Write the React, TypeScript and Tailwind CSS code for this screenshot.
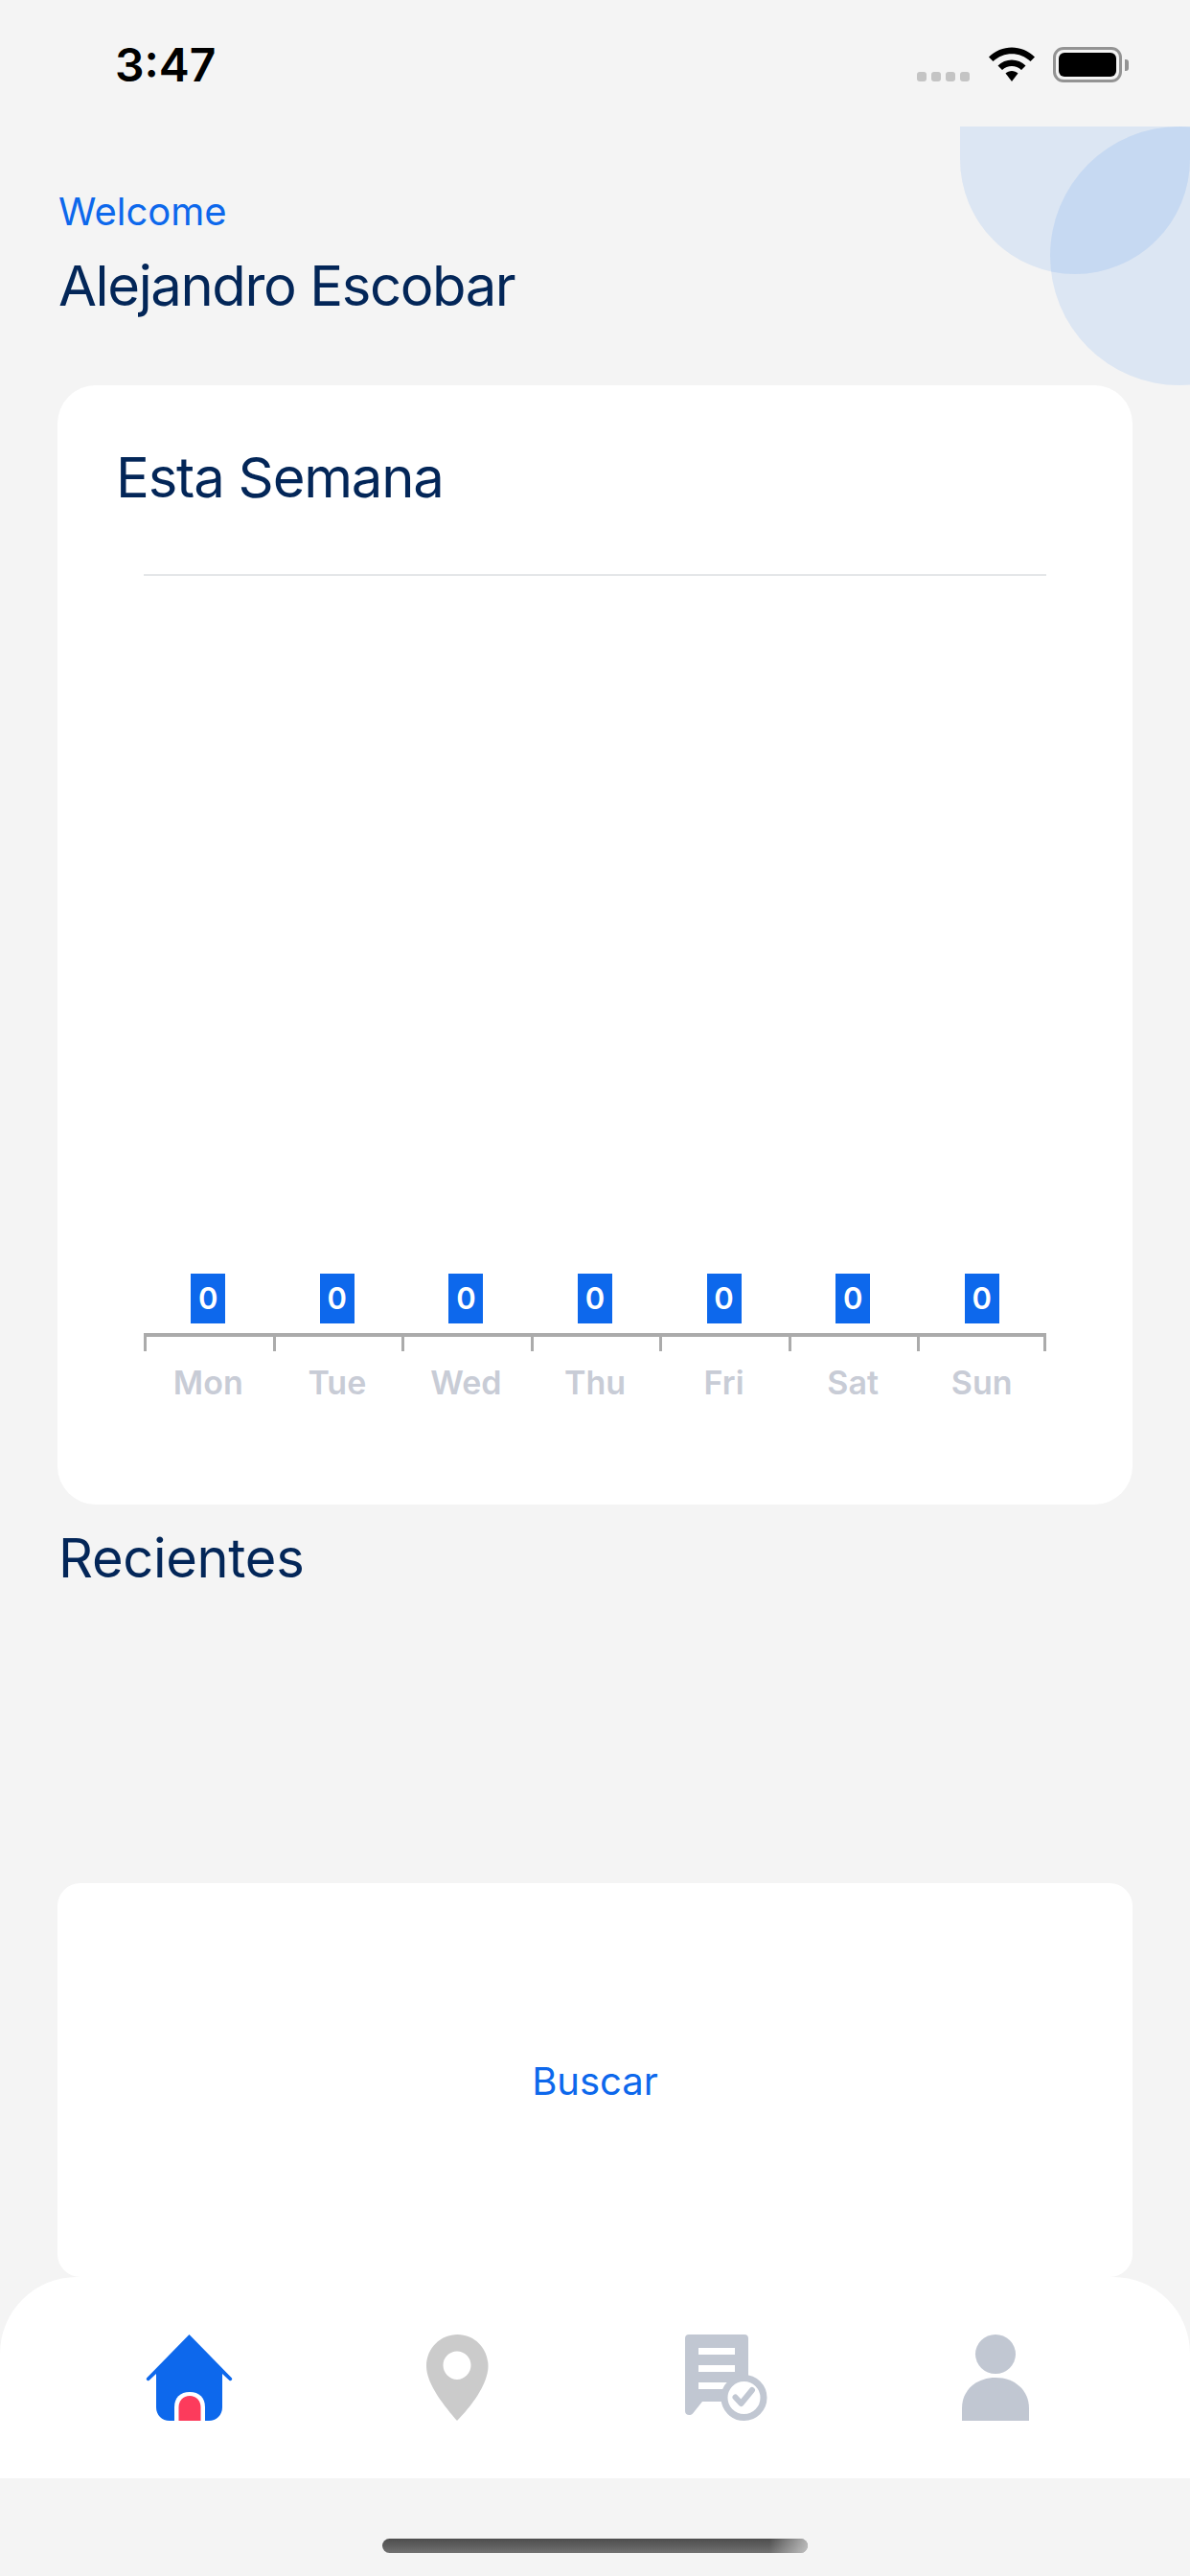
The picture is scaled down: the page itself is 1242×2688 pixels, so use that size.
const days = ["Mon", "Tue", "Wed", "Thu", "Fri", "Sat", "Sun"];

function StatusBar() {
  return (
    <div className="relative z-10 flex h-[132px] items-start justify-between pl-[120px] pr-[64px]">
      <span className="mt-[42px] text-[48px] leading-[52px] font-semibold text-black">3:47</span>
      <div className="mt-[49px] flex items-start">
        {/* Signal */}
        <div className="mt-[26px] mr-[20px] flex gap-[5px]">
          {[0, 1, 2, 3].map((i) => (
            <div key={i} className="h-[10px] w-[10px] rounded-[3px] bg-[#c4c4c4]" />
          ))}
        </div>
        {/* Wifi */}
        <svg width="48" height="36" viewBox="0 0 48 36" className="mr-[19px]">
          <path d="M0 10.5C13-3 35-3 48 10.500L43.500 15C32.500 4.500 15.500 4.500 4.500 15Z" fill="#000" />
          <path d="M9.500 19.500C17 11.500 31 11.500 38.500 19.500L34 24C28.500 18.500 19.500 18.500 14 24Z" fill="#000" />
          <path d="M17.500 27.500C21 24 27 24 30.500 27.500L24 36Z" fill="#000" />
        </svg>
        {/* Battery */}
        <div className="flex items-center">
          <div className="h-[37px] w-[72px] rounded-[11px] border-[3px] border-[#939393] p-[3px]">
            <div className="h-full w-full rounded-[6px] bg-black" />
          </div>
          <div className="ml-[3px] h-[12px] w-[4px] rounded-r-[3px] bg-[#939393]" />
        </div>
      </div>
    </div>
  );
}

function Chart() {
  return (
    <div className="flex h-[1168px] flex-col rounded-[40px] bg-white">
      <h2 className="mt-[66px] ml-[61px] text-[58px] leading-[60px] tracking-[-1.2px] text-[#032658]">Esta Semana</h2>
      <div className="mt-[71px] ml-[90px] h-[2px] w-[942px] bg-[#e4e6e9]" />
      <div className="mt-[728px] ml-[90px] w-[942px]">
        <div className="grid grid-cols-7">
          {days.map((day) => (
            <div key={day} className="flex justify-center">
              <div className="flex h-[52px] w-[36px] items-center justify-center bg-[#0d68ec] text-[31px] font-semibold text-white">
                0
              </div>
            </div>
          ))}
        </div>
        <div className="mt-[10px] h-[4px] bg-[#ababab]" />
        <div className="grid grid-cols-7">
          {days.map((day, i) => (
            <div
              key={day}
              className={i === 6 ? "h-[15px] border-x-[3px] border-[#ababab]" : "h-[15px] border-l-[3px] border-[#ababab]"}
            />
          ))}
        </div>
        <div className="mt-[13px] grid grid-cols-7">
          {days.map((day) => (
            <span key={day} className="text-center text-[34px] leading-[40px] font-semibold text-[#c8ccd6]">
              {day}
            </span>
          ))}
        </div>
      </div>
    </div>
  );
}

function HomeIcon() {
  return (
    <svg width="91" height="90" viewBox="0 0 91 90">
      <path
        d="M45.500 0L90 45.500C91 47 89 49 87.500 48L80 41V76C80 84 74 90 66 90H25C17 90 11 84 11 76V41L3.500 48C2 49 0 47 1 45.500Z"
        fill="#0d68ec"
      />
      <path d="M30 90V76C30 66 36 60 46 60C56 60 62 66 62 76V90Z" fill="#fff" />
      <path d="M34.500 90V76C34.500 69 39 64 46 64C53 64 57.500 69 57.500 76V90Z" fill="#fc3b5c" />
    </svg>
  );
}

function PinIcon() {
  return (
    <svg width="65" height="90" viewBox="0 0 65 90">
      <path
        fillRule="evenodd"
        d="M32.500 0C50 0 64.500 14 64.500 33C64.500 52 46 76 32 90C20 76 0 52 0 33C0 14 15 0 32.500 0ZM32 17.500C24 17.500 17.500 24 17.500 32C17.500 40 24 47 32 47C40 47 46.500 40 46.500 32C46.500 24 40 17.500 32 17.500Z"
        fill="#cbcbcb"
      />
    </svg>
  );
}

function DocIcon() {
  return (
    <svg width="86" height="90" viewBox="0 0 86 90">
      <path
        d="M4 0H62C64.500 0 66 1.500 66 4V50H40V70H18L8 82.500C5 85.500 0 84 0 80V4C0 1.500 1.500 0 4 0Z"
        fill="#c1c7d2"
      />
      <rect x="14" y="14" width="38" height="7" fill="#fff" />
      <rect x="14" y="32" width="38" height="7" fill="#fff" />
      <path d="M14 50H44L41 57H14Z" fill="#fff" />
      <circle cx="61.500" cy="66" r="20.500" fill="#fff" stroke="#c1c7d2" strokeWidth="7" />
      <path d="M52.500 65.500L58.500 72L70 58" fill="none" stroke="#c1c7d2" strokeWidth="6" strokeLinecap="round" strokeLinejoin="round" />
    </svg>
  );
}

function PersonIcon() {
  return (
    <svg width="70" height="90" viewBox="0 0 70 90">
      <ellipse cx="35" cy="20.500" rx="21" ry="20.500" fill="#c1c7d2" />
      <path d="M0 90V77C0 58 15 45 35 45C55 45 70 58 70 77V90Z" fill="#c1c7d2" />
    </svg>
  );
}

export default function App() {
  return (
    <div className="relative flex h-[2688px] w-[1242px] flex-col overflow-hidden bg-[#f4f4f4] font-['Inter',sans-serif]">
      {/* Corner shapes */}
      <div className="absolute top-[132px] left-[1002px] h-[154px] w-[240px] rounded-b-[120px] bg-[#0d68ec]/[0.1]" />
      <div className="absolute top-[132px] left-[1096px] h-[270px] w-[270px] rounded-full bg-[#0d68ec]/[0.1]" />

      <StatusBar />

      <div className="relative flex flex-col px-[60px]">
        <span className="mt-[65px] ml-[1px] text-[40px] leading-[48px] text-[#0d68ec]">Welcome</span>
        <span className="mt-[18px] ml-[1px] text-[58px] leading-[70px] tracking-[-1.4px] text-[#032658]">Alejandro Escobar</span>
        <div className="mt-[69px]">
          <Chart />
        </div>
        <h2 className="mt-[25px] ml-[1px] text-[56px] leading-[62px] tracking-[-0.3px] text-[#032658]">Recientes</h2>
        <div className="mt-[308px] flex h-[411px] items-center justify-center rounded-[24px] bg-white">
          <span className="mt-[2px] text-[40px] text-[#0d68ec]">Buscar</span>
        </div>
      </div>

      {/* Tab bar */}
      <nav className="relative grid h-[210px] grid-cols-4 items-start rounded-t-[80px] bg-white pt-[60px] pr-[63px] pl-[57px]">
        <div className="flex justify-center">
          <HomeIcon />
        </div>
        <div className="flex justify-center">
          <PinIcon />
        </div>
        <div className="flex justify-center">
          <DocIcon />
        </div>
        <div className="flex justify-center">
          <PersonIcon />
        </div>
      </nav>

      {/* Home indicator */}
      <div className="relative mx-auto mt-[63px] h-[15px] w-[444px] rounded-full bg-linear-to-b from-[#4d4d4d] to-[#717171]">
        <div className="absolute inset-y-0 right-0 w-[40px] rounded-r-full bg-linear-to-r from-transparent to-[#f4f4f4]/60" />
      </div>
    </div>
  );
}
